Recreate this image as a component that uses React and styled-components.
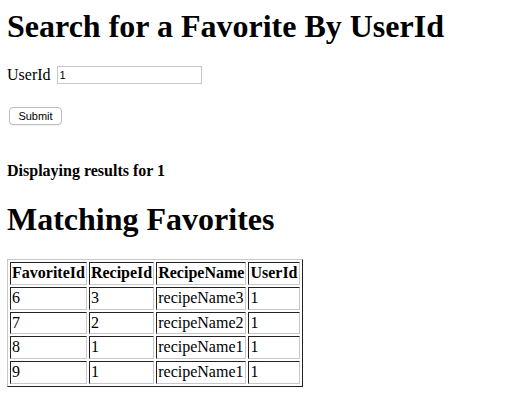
import styled, { createGlobalStyle } from 'styled-components';

const GlobalStyle = createGlobalStyle`
  body {
    margin: 8px 8px 8px 7px;
    font-family: "Liberation Serif", "Times New Roman", serif;
    font-size: 16px;
    color: #000;
    background: #fff;
  }
`;

const Title = styled.h1`
  font-size: 32px;
  font-weight: bold;
  margin: ${(p) => (p.$first ? '0 0 21px' : '21px 0')};
`;

const Form = styled.form`
  margin: 0;
`;

const Field = styled.div`
  display: flex;
  align-items: center;
  gap: 6px;
  margin-top: 1px;
`;

const Input = styled.input`
  width: 139px;
  height: 14px;
  padding: 1px 2px;
  border: 1px solid #c8c8c8;
  font-family: "Liberation Sans", Arial, sans-serif;
  font-size: 11px;
  outline: none;
`;

const Button = styled.button`
  display: block;
  margin: 23px 0 0 2px;
  padding: 0 8px;
  height: 18px;
  width: 53px;
  font-family: "Liberation Sans", Arial, sans-serif;
  font-size: 11px;
  color: #000;
  background: #fff;
  border: 1px solid #bdbdbd;
  border-radius: 4px;
  box-shadow: 0 1px 1px rgba(0, 0, 0, 0.06);
`;

const Status = styled.h4`
  font-size: 16px;
  font-weight: bold;
  margin: 37px 0 0;
`;

const Table = styled.table`
  margin-top: 1px;
  border: 1px solid;
  border-color: #c8c8c8 #222 #222 #c8c8c8;
  border-collapse: separate;
  border-spacing: 2px;
`;

const Cell = styled.td`
  border: 1px solid;
  border-color: #222 #c8c8c8 #c8c8c8 #222;
  padding: 1px;
  line-height: 18.8px;
  font-weight: ${(p) => (p.$head ? 'bold' : 'normal')};
  text-align: left;
`;

const favorites = [
  { favoriteId: 6, recipeId: 3, recipeName: 'recipeName3', userId: 1 },
  { favoriteId: 7, recipeId: 2, recipeName: 'recipeName2', userId: 1 },
  { favoriteId: 8, recipeId: 1, recipeName: 'recipeName1', userId: 1 },
  { favoriteId: 9, recipeId: 1, recipeName: 'recipeName1', userId: 1 },
];

function App() {
  return (
    <>
      <GlobalStyle />
      <Title $first>Search for a Favorite By UserId</Title>
      <Form onSubmit={(e) => e.preventDefault()}>
        <Field>
          <label htmlFor='userId'>UserId</label>
          <Input id='userId' defaultValue='1' />
        </Field>
        <Button type='submit'>Submit</Button>
      </Form>
      <Status>Displaying results for 1</Status>
      <Title>Matching Favorites</Title>
      <Table>
        <tbody>
          <tr>
            <Cell as='th' $head>FavoriteId</Cell>
            <Cell as='th' $head>RecipeId</Cell>
            <Cell as='th' $head>RecipeName</Cell>
            <Cell as='th' $head>UserId</Cell>
          </tr>
          {favorites.map((f) => (
            <tr key={f.favoriteId}>
              <Cell>{f.favoriteId}</Cell>
              <Cell>{f.recipeId}</Cell>
              <Cell>{f.recipeName}</Cell>
              <Cell>{f.userId}</Cell>
            </tr>
          ))}
        </tbody>
      </Table>
    </>
  );
}

export default App;
